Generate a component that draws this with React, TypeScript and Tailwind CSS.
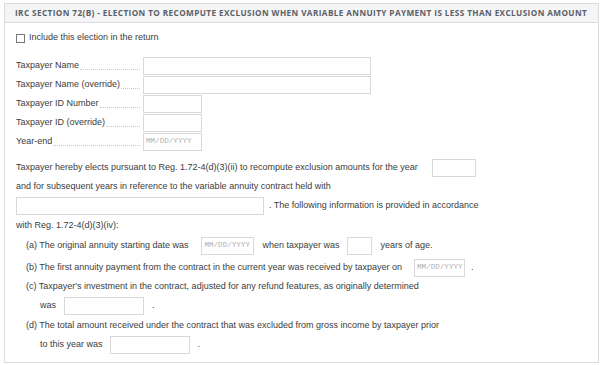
import React from 'react';

function Field({ className = '' }: { className?: string }) {
  return <div className={`h-[18px] border border-[#d9d9d9] bg-white ${className}`} />;
}

function DateField({ width = 'w-[53px]', className = '' }: { width?: string; className?: string }) {
  return (
    <div
      className={`h-[18px] ${width} border border-[#d9d9d9] bg-white flex items-center pl-[2px] text-[7.6px] text-[#b0b0b0] font-['Liberation_Mono',monospace] overflow-hidden whitespace-nowrap ${className}`}
    >
      MM/DD/YYYY
    </div>
  );
}

function LabelRow({ label, children }: { label: string; children: React.ReactNode }) {
  return (
    <div className="flex items-center h-[18px]">
      <div className="w-[127px] flex items-end whitespace-nowrap">
        <span>{label}</span>
        <span className="flex-1 ml-[1px] mr-[3px] mb-[3px] border-b border-dotted border-[#c3cad2]" />
      </div>
      {children}
    </div>
  );
}

export default function App() {
  return (
    <div className="w-[605px] h-[365px] bg-white pt-[3px] pl-[4px] font-['Liberation_Sans',Arial,sans-serif] text-[9px] text-[#3c3c3c]">
      <div className="w-[595px] h-[360px] border border-[#dcdcdc]">
        <div className="h-[19px] bg-[#f4f5f6] border-b border-[#dcdcdc] flex items-center pl-[10px] font-['Open_Sans',sans-serif] font-bold text-[8.2px] tracking-[0.4px] text-[#5b6068] whitespace-nowrap">
          IRC SECTION 72(B) - ELECTION TO RECOMPUTE EXCLUSION WHEN VARIABLE ANNUITY PAYMENT IS LESS THAN EXCLUSION AMOUNT
        </div>

        <div className="pl-[11px]">
          <label className="flex items-center h-[14px] mt-[8px]">
            <span className="w-[9px] h-[9px] border border-[#777] bg-white mr-[4px]" />
            Include this election in the return
          </label>

          <div className="mt-[12px] flex flex-col gap-[1px]">
            <LabelRow label="Taxpayer Name">
              <Field className="w-[228px]" />
            </LabelRow>
            <LabelRow label="Taxpayer Name (override)">
              <Field className="w-[228px]" />
            </LabelRow>
            <LabelRow label="Taxpayer ID Number">
              <Field className="w-[59px]" />
            </LabelRow>
            <LabelRow label="Taxpayer ID (override)">
              <Field className="w-[59px]" />
            </LabelRow>
            <LabelRow label="Year-end">
              <DateField width="w-[59px]" />
            </LabelRow>
          </div>

          <div className="mt-[8px] flex items-center h-[18px]">
            <span>Taxpayer hereby elects pursuant to Reg. 1.72-4(d)(3)(ii) to recompute exclusion amounts for the year</span>
            <Field className="w-[44px] ml-[14px]" />
          </div>
          <div className="mt-[1px] h-[18px] flex items-center">
            and for subsequent years in reference to the variable annuity contract held with
          </div>
          <div className="mt-[1px] flex items-center h-[18px]">
            <Field className="w-[248px]" />
            <span className="ml-[5px]">. The following information is provided in accordance</span>
          </div>
          <div className="mt-[2px] h-[18px] flex items-center">with Reg. 1.72-4(d)(3)(iv):</div>

          <div className="pl-[10px]">
            <div className="mt-[2px] flex items-center h-[18px]">
              <span>(a) The original annuity starting date was</span>
              <DateField className="ml-[13px]" />
              <span className="ml-[8px]">when taxpayer was</span>
              <Field className="w-[25px] ml-[8px]" />
              <span className="ml-[8px]">years of age.</span>
            </div>
            <div className="mt-[4px] flex items-center h-[18px]">
              <span>(b) The first annuity payment from the contract in the current year was received by taxpayer on</span>
              <DateField width="w-[51px]" className="ml-[12px]" />
              <span className="ml-[6px]">.</span>
            </div>
            <div className="mt-[1px] h-[18px] flex items-center">
              (c) Taxpayer's investment in the contract, adjusted for any refund features, as originally determined
            </div>
            <div className="mt-[1px] flex items-center h-[18px] pl-[14px]">
              <span>was</span>
              <Field className="w-[80px] ml-[8px]" />
              <span className="ml-[8px]">.</span>
            </div>
            <div className="mt-[2px] h-[18px] flex items-center">
              (d) The total amount received under the contract that was excluded from gross income by taxpayer prior
            </div>
            <div className="mt-[1px] flex items-center h-[18px] pl-[14px]">
              <span>to this year was</span>
              <Field className="w-[80px] ml-[7px]" />
              <span className="ml-[8px]">.</span>
            </div>
          </div>
        </div>
      </div>
    </div>
  );
}
